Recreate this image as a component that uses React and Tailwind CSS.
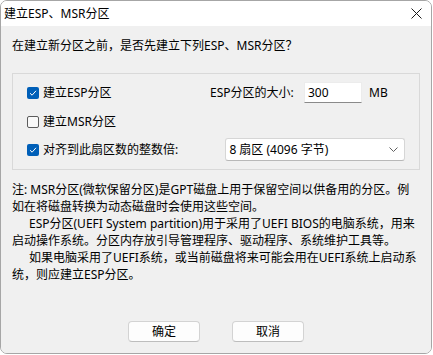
import React from "react";

const font = { fontFamily: '"Noto Sans", "Noto Sans CJK SC", sans-serif' };

function Check({ checked }) {
  if (checked) {
    return (
      <span className="flex h-[12px] w-[12px] shrink-0 items-center justify-center rounded-[2px] bg-[#005fb8]">
        <svg width="10" height="10" viewBox="0 0 10 10">
          <path d="M2 5.2 L4.1 7.2 L8 2.8" fill="none" stroke="#fff" strokeWidth="1" />
        </svg>
      </span>
    );
  }
  return <span className="h-[12px] w-[12px] shrink-0 rounded-[2px] border border-[#5c5c5c] bg-[#f9f9f9]" />;
}

export default function App() {
  return (
    <div className="h-[355px] w-[433px] bg-white text-[12px] text-black" style={font}>
      <div className="flex h-[354px] w-[432px] flex-col overflow-hidden rounded-[7px] border border-[#a6a6a6]">
        <div className="flex h-[25px] shrink-0 items-center justify-between bg-white pl-[3px] pr-[9px]">
          <span className="leading-[17px]">建立ESP、MSR分区</span>
          <svg width="11" height="11" viewBox="0 0 11 11">
            <path d="M0.5 0.5 L10.5 10.5 M10.5 0.5 L0.5 10.5" stroke="#1a1a1a" strokeWidth="1" />
          </svg>
        </div>
        <div className="flex flex-1 flex-col bg-[#f0f0f0] px-[11px]">
          <div className="pt-[11px] leading-[17px]">在建立新分区之前，是否先建立下列ESP、MSR分区？</div>
          <div className="mt-[19px] flex flex-col border border-[#d9d9d9] px-[14px] pb-[8px] pt-[8px]">
            <div className="flex h-[21px] items-center">
              <div className="flex w-[183px] items-center gap-[4px]">
                <Check checked />
                <span className="leading-[17px]">建立ESP分区</span>
              </div>
              <span className="w-[94px] leading-[17px]">ESP分区的大小:</span>
              <div className="flex h-[21px] w-[58px] items-center border border-[#ececec] border-b-[#8a8a8a] bg-white pl-[3px] leading-[17px]">
                300
              </div>
              <span className="ml-[7px] leading-[17px]">MB</span>
            </div>
            <div className="mt-[10px] flex h-[17px] items-center gap-[4px]">
              <Check checked={false} />
              <span className="leading-[17px]">建立MSR分区</span>
            </div>
            <div className="mt-[8px] flex h-[23px] items-center">
              <div className="flex w-[200px] items-center gap-[4px]">
                <Check checked />
                <span className="leading-[17px]">对齐到此扇区数的整数倍:</span>
              </div>
              <div className="flex h-[23px] w-[181px] items-center justify-between rounded-[3px] border border-[#d6d6d6] border-b-[#b8b8b8] bg-white pl-[3px] pr-[6px]">
                <span className="leading-[17px]">8 扇区 (4096 字节)</span>
                <svg width="9" height="5" viewBox="0 0 9 5">
                  <path d="M0.5 0.5 L4.5 4.5 L8.5 0.5" fill="none" stroke="#606060" strokeWidth="1" />
                </svg>
              </div>
            </div>
          </div>
          <div className="mt-[11px] flex flex-col whitespace-nowrap leading-[17px]">
            <div>注: MSR分区(微软保留分区)是GPT磁盘上用于保留空间以供备用的分区。例</div>
            <div>如在将磁盘转换为动态磁盘时会使用这些空间。</div>
            <div className="pl-[17px]">ESP分区(UEFI System partition)用于采用了UEFI BIOS的电脑系统，用来</div>
            <div>启动操作系统。分区内存放引导管理程序、驱动程序、系统维护工具等。</div>
            <div className="pl-[17px]">如果电脑采用了UEFI系统，或当前磁盘将来可能会用在UEFI系统上启动系</div>
            <div>统，则应建立ESP分区。</div>
          </div>
          <div className="flex-1" />
          <div className="flex justify-center gap-[32px] pb-[11px]">
            <button className="flex h-[21px] w-[72px] items-center justify-center rounded-[4px] border border-[#d3d3d3] border-b-[#bdbdbd] bg-[#fdfdfd] leading-[17px]">
              确定
            </button>
            <button className="flex h-[21px] w-[72px] items-center justify-center rounded-[4px] border border-[#d3d3d3] border-b-[#bdbdbd] bg-[#fdfdfd] leading-[17px]">
              取消
            </button>
          </div>
        </div>
      </div>
    </div>
  );
}
